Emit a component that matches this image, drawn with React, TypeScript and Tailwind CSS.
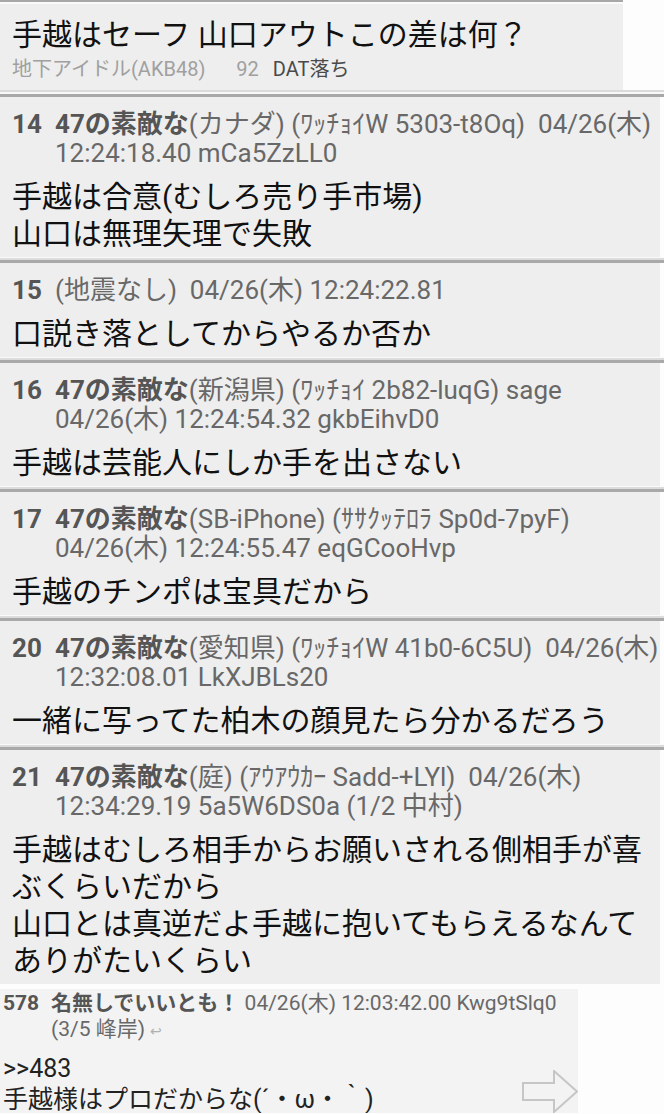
import React from "react";

type Post = {
  num: string;
  name?: string;
  line1: string;
  line2?: string;
  body: string[];
};

const posts: Post[] = [
  {
    num: "14",
    name: "47の素敵な",
    line1: "(カナダ) (ﾜｯﾁｮｲW 5303-t8Oq)  04/26(木)",
    line2: "12:24:18.40 mCa5ZzLL0",
    body: ["手越は合意(むしろ売り手市場)", "山口は無理矢理で失敗"],
  },
  {
    num: "15",
    line1: "(地震なし)  04/26(木) 12:24:22.81",
    body: ["口説き落としてからやるか否か"],
  },
  {
    num: "16",
    name: "47の素敵な",
    line1: "(新潟県) (ﾜｯﾁｮｲ 2b82-luqG) sage",
    line2: "04/26(木) 12:24:54.32 gkbEihvD0",
    body: ["手越は芸能人にしか手を出さない"],
  },
  {
    num: "17",
    name: "47の素敵な",
    line1: "(SB-iPhone) (ｻｻｸｯﾃﾛﾗ Sp0d-7pyF)",
    line2: "04/26(木) 12:24:55.47 eqGCooHvp",
    body: ["手越のチンポは宝具だから"],
  },
  {
    num: "20",
    name: "47の素敵な",
    line1: "(愛知県) (ﾜｯﾁｮｲW 41b0-6C5U)  04/26(木)",
    line2: "12:32:08.01 LkXJBLs20",
    body: ["一緒に写ってた柏木の顔見たら分かるだろう"],
  },
  {
    num: "21",
    name: "47の素敵な",
    line1: "(庭) (ｱｳｱｳｶｰ Sadd-+LYl)  04/26(木)",
    line2: "12:34:29.19 5a5W6DS0a (1/2 中村)",
    body: [
      "手越はむしろ相手からお願いされる側相手が喜",
      "ぶくらいだから",
      "山口とは真逆だよ手越に抱いてもらえるなんて",
      "ありがたいくらい",
    ],
  },
];

function Sep() {
  return (
    <div className="w-full">
      <div className="h-px bg-[#fafafa]" />
      <div className="h-[2px] bg-[#dcdcdc]" />
      <div className="h-[3px] bg-[#a9a9a9]" />
    </div>
  );
}

function PostView({ p }: { p: Post }) {
  return (
    <div className="w-[660px] bg-[#eeeeee] pt-[13px] pb-[5px]">
      <div className="flex text-[26px] leading-[29px] text-[#686868] whitespace-pre">
        <div className="w-[55px] shrink-0 pl-[12px] font-bold text-[#555555]">{p.num}</div>
        <div>
          <div>
            {p.name && <span className="font-bold text-[#555555]">{p.name}</span>}
            {p.line1}
          </div>
          {p.line2 && <div>{p.line2}</div>}
        </div>
      </div>
      <div className="mt-[10px] pl-[12px] text-[30px] leading-[37px] text-[#111111] whitespace-nowrap">
        {p.body.map((l, i) => (
          <div key={i}>{l}</div>
        ))}
      </div>
    </div>
  );
}

export default function App() {
  return (
    <div className="w-[664px] h-[1114px] overflow-hidden bg-[#fdfdfd] font-['Roboto','Noto_Sans_CJK_JP',sans-serif]">
      {/* header */}
      <div className="w-[623px] bg-[#eeeeee]">
        <div className="h-[2px] bg-[#a8a8a8]" />
        <div className="h-[2px] bg-[#fafafa]" />
        <div className="pt-[12px] pb-[8px] pl-[12px]">
          <div className="text-[30px] leading-[37px] text-[#111111] whitespace-nowrap">
            手越はセーフ 山口アウトこの差は何？
          </div>
          <div className="mt-[3px] flex text-[20px] leading-[26px] whitespace-nowrap">
            <span className="text-[#a0a0a0]">地下アイドル(AKB48)</span>
            <span className="ml-[31px] text-[#a0a0a0]">92</span>
            <span className="ml-[14px] text-[#4a4a4a]">DAT落ち</span>
          </div>
        </div>
      </div>
      <div className="w-full">
        <div className="h-[2px] bg-[#dadada]" />
        <div className="h-[2px] bg-[#f8f8f8]" />
        <div className="h-[3px] bg-[#a8a8a8]" />
      </div>

      {posts.map((p, i) => (
        <React.Fragment key={p.num}>
          <PostView p={p} />
          {i < posts.length - 1 && <Sep />}
        </React.Fragment>
      ))}

      {/* bottom preview */}
      <div className="relative mt-[5px] w-[578px] h-[124px] overflow-hidden bg-[#f3f3f3] pt-[1px]">
        <div className="flex text-[21px] leading-[26px] text-[#686868] whitespace-pre">
          <div className="w-[51px] shrink-0 pl-[3px] font-bold text-[#555555]">578</div>
          <div>
            <div>
              <span className="font-bold text-[#555555]">名無しでいいとも！</span> 04/26(木) 12:03:42.00 Kwg9tSlq0
            </div>
            <div>
              (3/5 峰岸) <span className="text-[14px] text-[#b0b0b0]">↩</span>
            </div>
          </div>
        </div>
        <div className="mt-[9px] pl-[3px] text-[25px] leading-[31px] text-[#222222] whitespace-nowrap">
          <div>&gt;&gt;483</div>
          <div>手越様はプロだからな(´・ω・｀)</div>
        </div>
        <svg
          className="absolute left-[522px] top-[81px]"
          width="56"
          height="44"
          viewBox="0 0 56 44"
        >
          <polygon
            points="1,13 32,13 32,1 55,21.5 32,42 32,30 1,30"
            fill="none"
            stroke="#c6c6c6"
            strokeWidth="2"
            strokeLinejoin="miter"
          />
        </svg>
      </div>
    </div>
  );
}
